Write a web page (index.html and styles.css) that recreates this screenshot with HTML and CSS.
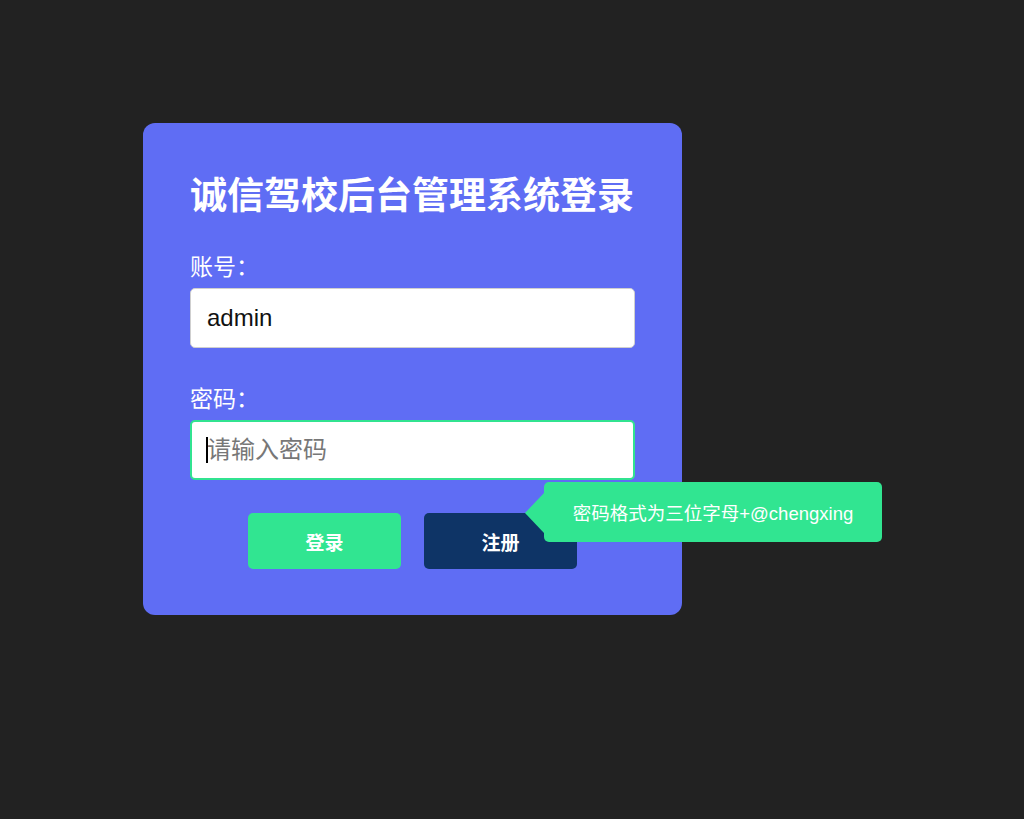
FILE: index.html
```html
<!DOCTYPE html>
<html lang="zh-CN">
<head>
<meta charset="utf-8">
<title>诚信驾校后台管理系统登录</title>
<link rel="stylesheet" href="styles.css">
</head>
<body>
<div class="page">
  <form class="card">
    <h1 class="title">诚信驾校后台管理系统登录</h1>
    <div class="field">
      <label class="label">账号：</label>
      <input class="input" type="text" value="admin">
    </div>
    <div class="field field-pwd">
      <label class="label">密码：</label>
      <div class="pwd-wrap">
        <input class="input input-focus" type="password" placeholder="请输入密码">
        <span class="caret"></span>
        <div class="tooltip">密码格式为三位字母+@chengxing</div>
      </div>
    </div>
    <div class="actions">
      <button type="button" class="btn btn-login">登录</button>
      <button type="button" class="btn btn-register">注册</button>
    </div>
  </form>
</div>
</body>
</html>
```

FILE: styles.css
```css
* { box-sizing: border-box; }
html, body { margin: 0; padding: 0; }
body {
  background: #222222;
  font-family: "Liberation Sans", "Noto Sans CJK SC", sans-serif;
  width: 1024px;
  height: 819px;
  overflow: hidden;
}
.page {
  padding: 123px 0 0 143px;
}
.card {
  width: 539px;
  height: 492px;
  background: #5f6df4;
  border-radius: 12px;
  padding: 48px 47px 0 47px;
  display: flex;
  flex-direction: column;
}
.title {
  margin: 0;
  font-family: "Noto Sans CJK SC", sans-serif;
  font-size: 37px;
  line-height: 44px;
  font-weight: bold;
  color: #ffffff;
  white-space: nowrap;
}
.field {
  display: flex;
  flex-direction: column;
  margin-top: 35px;
}
.field-pwd { margin-top: 34px; }
.label {
  font-family: "Noto Sans CJK SC", sans-serif;
  font-size: 23px;
  line-height: 30px;
  color: #ffffff;
  margin-bottom: 8px;
}
.pwd-wrap { position: relative; }
.input {
  width: 445px;
  height: 60px;
  border: 1px solid #cfcfcf;
  border-radius: 5px;
  background: #ffffff;
  padding: 0 16px;
  font-family: "Liberation Sans", "Noto Sans CJK SC", sans-serif;
  font-size: 24px;
  color: #111111;
  outline: none;
  display: block;
}
.input-focus {
  border: 2px solid #31e390;
  padding: 0 15px;
}
.input::placeholder {
  color: #777777;
  font-family: "Noto Sans CJK SC", sans-serif;
}
.caret {
  position: absolute;
  left: 16px;
  top: 17px;
  width: 2px;
  height: 26px;
  background: #000000;
}
.tooltip {
  position: absolute;
  left: 354px;
  top: 62px;
  height: 60px;
  width: 338px;
  background: #31e591;
  border-radius: 5px;
  color: #ffffff;
  font-size: 18.5px;
  display: flex;
  align-items: center;
  justify-content: center;
  white-space: nowrap;
}
.tooltip::before {
  content: "";
  position: absolute;
  left: -19px;
  top: 11px;
  width: 0;
  height: 0;
  border-top: 20px solid transparent;
  border-bottom: 20px solid transparent;
  border-right: 19px solid #31e591;
}
.actions {
  display: flex;
  justify-content: center;
  gap: 23px;
  margin-top: 33px;
}
.btn {
  width: 153px;
  height: 56px;
  border: none;
  border-radius: 5px;
  color: #ffffff;
  font-family: "Noto Sans CJK SC", sans-serif;
  font-size: 19px;
  font-weight: bold;
  cursor: pointer;
}
.btn-login { background: #31e591; }
.btn-register { background: #0e3466; }
```
